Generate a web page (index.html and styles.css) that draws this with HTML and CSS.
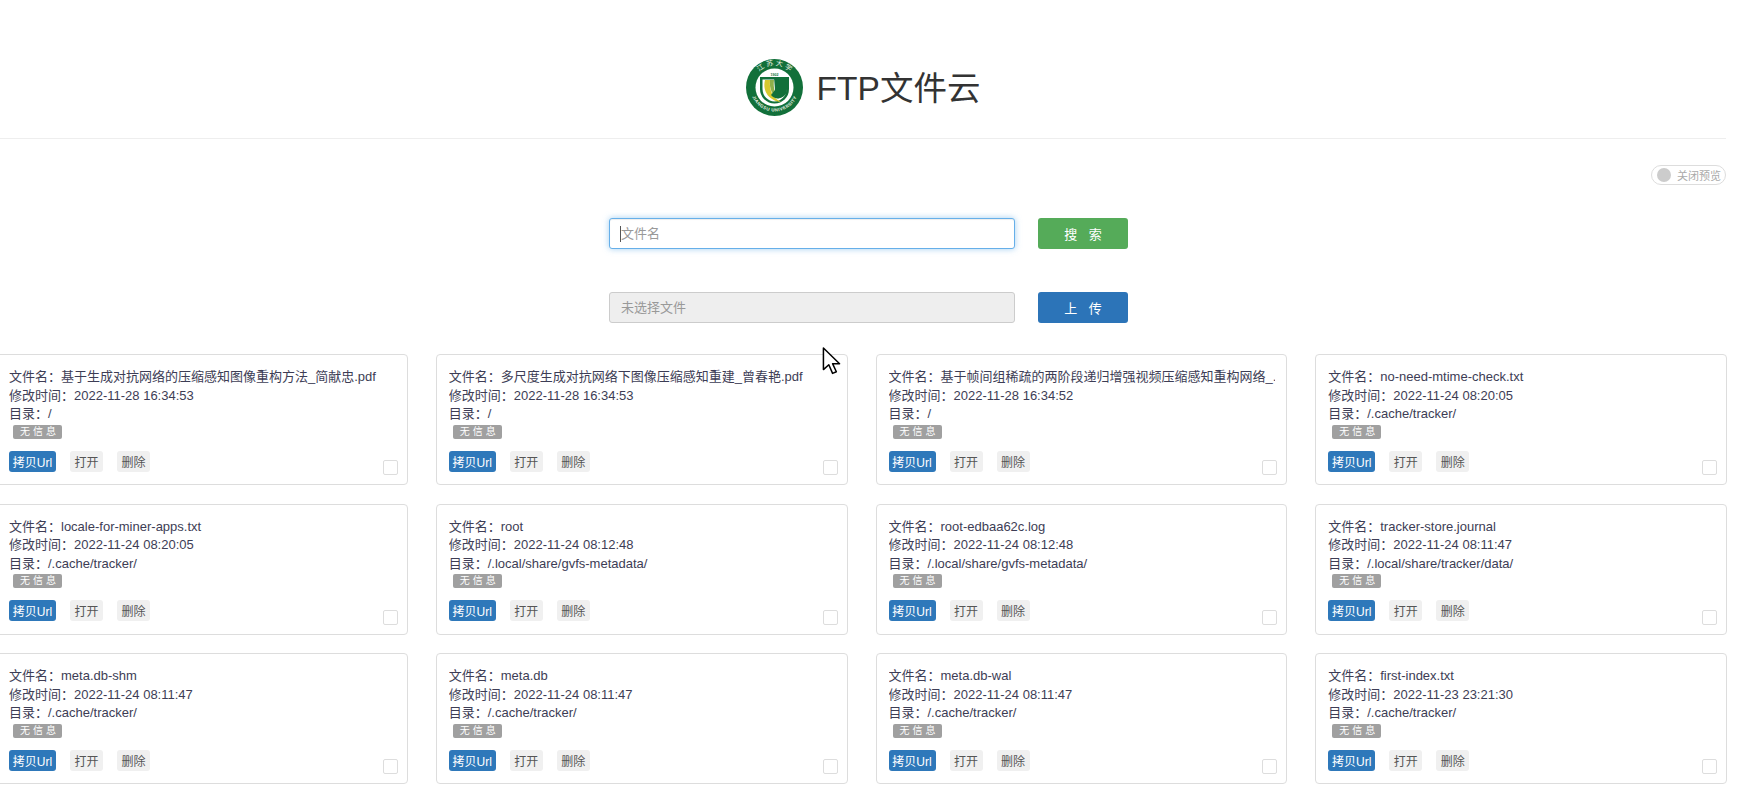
FILE: index.html
```html
<!DOCTYPE html>
<html lang="zh-CN">
<head>
    <meta charset="UTF-8">
    <title>FTP文件云</title>
    <link rel="stylesheet" href="styles.css">
</head>
<body>
    <div class="page">
        <header class="header">
            <svg class="logo" viewBox="0 0 57 57" width="57" height="57">
                <defs>
                    <path id="arcTop" d="M6.5 28.5 A22 22 0 0 1 50.5 28.5"/>
                    <path id="arcBottom" d="M4.5 28.5 A24 24 0 0 0 52.5 28.5"/>
                </defs>
                <circle cx="28.5" cy="28.5" r="28.5" fill="#12703a"/>
                <circle cx="28.5" cy="28.5" r="19" fill="#fff"/>
                <text class="logo-cn"><textPath href="#arcTop" startOffset="50%" text-anchor="middle">江 苏 大 学</textPath></text>
                <text class="logo-en"><textPath href="#arcBottom" startOffset="50%" text-anchor="middle">JIANGSU UNIVERSITY</textPath></text>
                <text class="logo-year" x="28.5" y="17" text-anchor="middle">1902</text>
                <path d="M14 18 H43 V30 A14.5 14.5 0 0 1 14 30 Z" fill="#12703a"/>
                <path d="M16.5 20.5 H40.5 V30 A12 12.5 0 0 1 16.5 30 Z" fill="#fff"/>
                <path d="M19 21 C16 33 24 42 35 43 C27 39 23 32 24 21 Z" fill="#d8c92e"/>
                <path d="M24 21 C23 31 27 37 33 40 C29 35 27 29 28 21 Z" fill="#8fb04a"/>
                <path d="M28 18 H41 V30 A9 9 0 0 1 25 36 L29 31 Z" fill="#12703a"/>
            </svg>
            <h1 class="title">FTP文件云</h1>
        </header>

        <div class="toggle-row">
            <div class="toggle"><span class="toggle-dot"></span>关闭预览</div>
        </div>

        <form class="action-row">
            <div class="field">
                <input class="text-input is-focus" type="text" placeholder="文件名">
                <span class="caret"></span>
            </div>
            <button type="button" class="action-btn btn-green">搜 索</button>
        </form>
        <form class="action-row upload-row">
            <div class="field">
                <input class="text-input" type="text" placeholder="未选择文件" disabled>
            </div>
            <button type="button" class="action-btn btn-blue">上 传</button>
        </form>

        <div class="cards">
            <div class="card">
                <p class="line">文件名：基于生成对抗网络的压缩感知图像重构方法_简献忠.pdf</p>
                <p class="line">修改时间：2022-11-28 16:34:53</p>
                <p class="line">目录：/</p>
                <span class="badge">无信息</span>
                <div class="card-btns"><button class="btn-copy">拷贝Url</button><button class="btn-plain">打开</button><button class="btn-plain">删除</button></div>
                <input class="check" type="checkbox">
            </div>
            <div class="card">
                <p class="line">文件名：多尺度生成对抗网络下图像压缩感知重建_曾春艳.pdf</p>
                <p class="line">修改时间：2022-11-28 16:34:53</p>
                <p class="line">目录：/</p>
                <span class="badge">无信息</span>
                <div class="card-btns"><button class="btn-copy">拷贝Url</button><button class="btn-plain">打开</button><button class="btn-plain">删除</button></div>
                <input class="check" type="checkbox">
            </div>
            <div class="card">
                <p class="line">文件名：基于帧间组稀疏的两阶段递归增强视频压缩感知重构网络_.pdf</p>
                <p class="line">修改时间：2022-11-28 16:34:52</p>
                <p class="line">目录：/</p>
                <span class="badge">无信息</span>
                <div class="card-btns"><button class="btn-copy">拷贝Url</button><button class="btn-plain">打开</button><button class="btn-plain">删除</button></div>
                <input class="check" type="checkbox">
            </div>
            <div class="card">
                <p class="line">文件名：no-need-mtime-check.txt</p>
                <p class="line">修改时间：2022-11-24 08:20:05</p>
                <p class="line">目录：/.cache/tracker/</p>
                <span class="badge">无信息</span>
                <div class="card-btns"><button class="btn-copy">拷贝Url</button><button class="btn-plain">打开</button><button class="btn-plain">删除</button></div>
                <input class="check" type="checkbox">
            </div>
            <div class="card">
                <p class="line">文件名：locale-for-miner-apps.txt</p>
                <p class="line">修改时间：2022-11-24 08:20:05</p>
                <p class="line">目录：/.cache/tracker/</p>
                <span class="badge">无信息</span>
                <div class="card-btns"><button class="btn-copy">拷贝Url</button><button class="btn-plain">打开</button><button class="btn-plain">删除</button></div>
                <input class="check" type="checkbox">
            </div>
            <div class="card">
                <p class="line">文件名：root</p>
                <p class="line">修改时间：2022-11-24 08:12:48</p>
                <p class="line">目录：/.local/share/gvfs-metadata/</p>
                <span class="badge">无信息</span>
                <div class="card-btns"><button class="btn-copy">拷贝Url</button><button class="btn-plain">打开</button><button class="btn-plain">删除</button></div>
                <input class="check" type="checkbox">
            </div>
            <div class="card">
                <p class="line">文件名：root-edbaa62c.log</p>
                <p class="line">修改时间：2022-11-24 08:12:48</p>
                <p class="line">目录：/.local/share/gvfs-metadata/</p>
                <span class="badge">无信息</span>
                <div class="card-btns"><button class="btn-copy">拷贝Url</button><button class="btn-plain">打开</button><button class="btn-plain">删除</button></div>
                <input class="check" type="checkbox">
            </div>
            <div class="card">
                <p class="line">文件名：tracker-store.journal</p>
                <p class="line">修改时间：2022-11-24 08:11:47</p>
                <p class="line">目录：/.local/share/tracker/data/</p>
                <span class="badge">无信息</span>
                <div class="card-btns"><button class="btn-copy">拷贝Url</button><button class="btn-plain">打开</button><button class="btn-plain">删除</button></div>
                <input class="check" type="checkbox">
            </div>
            <div class="card">
                <p class="line">文件名：meta.db-shm</p>
                <p class="line">修改时间：2022-11-24 08:11:47</p>
                <p class="line">目录：/.cache/tracker/</p>
                <span class="badge">无信息</span>
                <div class="card-btns"><button class="btn-copy">拷贝Url</button><button class="btn-plain">打开</button><button class="btn-plain">删除</button></div>
                <input class="check" type="checkbox">
            </div>
            <div class="card">
                <p class="line">文件名：meta.db</p>
                <p class="line">修改时间：2022-11-24 08:11:47</p>
                <p class="line">目录：/.cache/tracker/</p>
                <span class="badge">无信息</span>
                <div class="card-btns"><button class="btn-copy">拷贝Url</button><button class="btn-plain">打开</button><button class="btn-plain">删除</button></div>
                <input class="check" type="checkbox">
            </div>
            <div class="card">
                <p class="line">文件名：meta.db-wal</p>
                <p class="line">修改时间：2022-11-24 08:11:47</p>
                <p class="line">目录：/.cache/tracker/</p>
                <span class="badge">无信息</span>
                <div class="card-btns"><button class="btn-copy">拷贝Url</button><button class="btn-plain">打开</button><button class="btn-plain">删除</button></div>
                <input class="check" type="checkbox">
            </div>
            <div class="card">
                <p class="line">文件名：first-index.txt</p>
                <p class="line">修改时间：2022-11-23 23:21:30</p>
                <p class="line">目录：/.cache/tracker/</p>
                <span class="badge">无信息</span>
                <div class="card-btns"><button class="btn-copy">拷贝Url</button><button class="btn-plain">打开</button><button class="btn-plain">删除</button></div>
                <input class="check" type="checkbox">
            </div>
        </div>
    </div>

    <svg class="pointer" viewBox="0 0 17 26" width="19" height="28">
        <path d="M1 1 V21 L6 16.5 L9.5 24.5 L13 23 L9.5 15.5 H16 Z" fill="#fff" stroke="#000" stroke-width="1.4" stroke-linejoin="round"/>
    </svg>
</body>
</html>
```

FILE: styles.css
```css
html, body {
    margin: 0;
    height: 796px;
    overflow: hidden;
    background-color: #fff;
}
body {
    position: relative;
    font-family: "Liberation Sans", "Noto Sans CJK SC", sans-serif;
    font-size: 13px;
    color: #333;
}
.page {
    width: 1726px;
}

.header {
    display: flex;
    align-items: center;
    justify-content: center;
    gap: 14px;
    height: 139px;
    padding-top: 36px;
    border-bottom: 1px solid #eee;
    box-sizing: border-box;
}
.logo {
    flex: none;
}
.logo-cn {
    font-size: 7px;
    fill: #f2f5e8;
}
.logo-en {
    font-size: 4.4px;
    font-weight: bold;
    fill: #f2f5e8;
    letter-spacing: 0.5px;
}
.logo-year {
    font-size: 3.6px;
    font-weight: bold;
    fill: #12703a;
}
.title {
    margin: -4px 0 0;
    font-size: 33.5px;
    font-weight: normal;
    color: #333;
}

.toggle-row {
    display: flex;
    justify-content: flex-end;
    margin-top: 26px;
}
.toggle {
    display: flex;
    align-items: center;
    gap: 6px;
    width: 75px;
    height: 20px;
    padding-left: 5px;
    border: 1px solid #ddd;
    border-radius: 11px;
    box-sizing: border-box;
    font-size: 11px;
    color: #aaa;
    white-space: nowrap;
}
.toggle-dot {
    flex: none;
    width: 14px;
    height: 14px;
    border-radius: 50%;
    background-color: #ccc;
}

.action-row {
    display: flex;
    gap: 23px;
    margin: 33px 0 0;
    padding-left: 609px;
}
.upload-row {
    margin-top: 43px;
}
.field {
    position: relative;
    width: 406px;
}
.text-input {
    display: block;
    width: 100%;
    height: 31px;
    padding: 0 11px;
    border: 1px solid #ccc;
    border-radius: 3px;
    box-sizing: border-box;
    background-color: #fff;
    font-family: inherit;
    font-size: 13px;
    color: #555;
    outline: none;
}
.text-input::placeholder {
    color: #999;
    opacity: 1;
}
.text-input.is-focus {
    border-color: #66afe9;
    box-shadow: inset 0 1px 1px rgba(0, 0, 0, .075), 0 0 6px rgba(102, 175, 233, .6);
}
.text-input:disabled {
    background-color: #eee;
}
.caret {
    position: absolute;
    left: 11px;
    top: 8px;
    width: 1px;
    height: 16px;
    background-color: #555;
}
.action-btn {
    width: 90px;
    height: 31px;
    border: none;
    border-radius: 3px;
    font-family: inherit;
    font-size: 13px;
    color: #fff;
    word-spacing: 8px;
}
.btn-green {
    background-color: #55ab59;
}
.btn-blue {
    background-color: #2c74b8;
}

.cards {
    display: grid;
    grid-template-columns: repeat(4, 411.75px);
    column-gap: 28px;
    row-gap: 18.5px;
    margin: 31px 0 0 -4px;
}
.card {
    position: relative;
    height: 131px;
    padding: 13px 11px 0 12px;
    border: 1px solid #ddd;
    border-radius: 4px;
    box-sizing: border-box;
    background-color: #fff;
}
.line {
    margin: 0;
    line-height: 18.57px;
    color: #3d3d55;
    white-space: nowrap;
    overflow: hidden;
}
.badge {
    display: block;
    width: 49px;
    height: 14px;
    margin: 1px 0 0 4px;
    border-radius: 2px;
    background-color: #a0a0a0;
    font-size: 10px;
    line-height: 14px;
    letter-spacing: 3px;
    text-indent: 7px;
    color: #fff;
    white-space: nowrap;
}
.card-btns {
    display: flex;
    gap: 14px;
    margin-top: 12px;
}
.card-btns button {
    height: 21px;
    padding: 0;
    border: none;
    border-radius: 3px;
    font-family: inherit;
    font-size: 12px;
}
.btn-copy {
    width: 47px;
    background-color: #2e78ba;
    color: #fff;
}
.btn-plain {
    width: 33px;
    background-color: #f0f0f0;
    color: #555;
}
.check {
    position: absolute;
    right: 9px;
    bottom: 9px;
    width: 15px;
    height: 15px;
    margin: 0;
    border: 1px solid #ddd;
    border-radius: 2px;
    background-color: #fff;
    appearance: none;
}

.pointer {
    position: absolute;
    left: 822px;
    top: 347px;
}
```
